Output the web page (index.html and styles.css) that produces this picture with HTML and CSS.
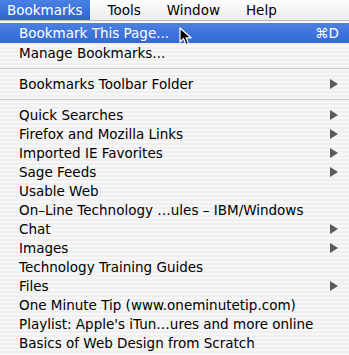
FILE: index.html
```html
<!DOCTYPE html>
<html lang="en">

<head>
    <meta charset="UTF-8">
    <title>Bookmarks Menu</title>
    <link rel="stylesheet" href="styles.css">
</head>

<body>
    <div class="menubar">
        <span class="title active">Bookmarks</span>
        <span class="title">Tools</span>
        <span class="title">Window</span>
        <span class="title">Help</span>
    </div>

    <div class="menu">
        <div class="item selected">
            <span>Bookmark This Page...</span>
            <span class="key">⌘D</span>
            <svg class="cursor" width="14" height="20" viewBox="0 0 14 20">
                <path d="M1 1 L1 15 L4.5 11.5 L7 17.5 L9.5 16.5 L7 10.8 L12 10.8 Z" fill="#000" stroke="#fff" stroke-width="1.2" stroke-linejoin="round" />
            </svg>
        </div>
        <div class="item">Manage Bookmarks...</div>
        <div class="separator"></div>
        <div class="item sub">Bookmarks Toolbar Folder</div>
        <div class="separator"></div>
        <div class="item sub">Quick Searches</div>
        <div class="item sub">Firefox and Mozilla Links</div>
        <div class="item sub">Imported IE Favorites</div>
        <div class="item sub">Sage Feeds</div>
        <div class="item">Usable Web</div>
        <div class="item">On–Line Technology …ules – IBM/Windows</div>
        <div class="item sub">Chat</div>
        <div class="item sub">Images</div>
        <div class="item">Technology Training Guides</div>
        <div class="item sub">Files</div>
        <div class="item">One Minute Tip (www.oneminutetip.com)</div>
        <div class="item">Playlist: Apple's iTun…ures and more online</div>
        <div class="item">Basics of Web Design from Scratch</div>
    </div>
</body>

</html>
```

FILE: styles.css
```css
body {
    margin: 0;
    width: 349px;
    height: 355px;
    overflow: hidden;
    font-family: "DejaVu Sans", "Noto Sans", sans-serif;
    font-size: 13.5px;
    color: #000;
    background: #f4f4f4;
}

.menubar {
    display: flex;
    height: 20px;
    background: linear-gradient(#fdfdfd, #ececec);
    border-bottom: 1px solid #b9b9b9;
}

.title {
    display: flex;
    align-items: center;
    padding: 0 9px 0 7px;
    margin-right: 10px;
}

.title.active {
    background: linear-gradient(#4a82e4, #2f62cf);
    color: white;
    padding-right: 8px;
}

.menu {
    padding-top: 2px;
    background: repeating-linear-gradient(#f7f7f7 0, #f7f7f7 2px, #efefef 2px, #efefef 4px);
    height: 334px;
}

.item {
    position: relative;
    display: flex;
    align-items: center;
    height: 19px;
    padding: 0 10px 0 19px;
}

.item.selected {
    background: linear-gradient(#4c80e0, #3468d6);
    color: white;
    height: 20px;
}

.key {
    margin-left: auto;
}

.sub::after {
    content: "";
    margin-left: auto;
    margin-right: 1px;
    border-left: 8px solid #5a5a5a;
    border-top: 5px solid transparent;
    border-bottom: 5px solid transparent;
}

.separator {
    height: 12px;
    display: flex;
    align-items: center;
}

.separator::before {
    content: "";
    flex: 1;
    height: 1px;
    background: #d0d0d0;
}

.cursor {
    position: absolute;
    left: 179px;
    top: 4px;
}
```
